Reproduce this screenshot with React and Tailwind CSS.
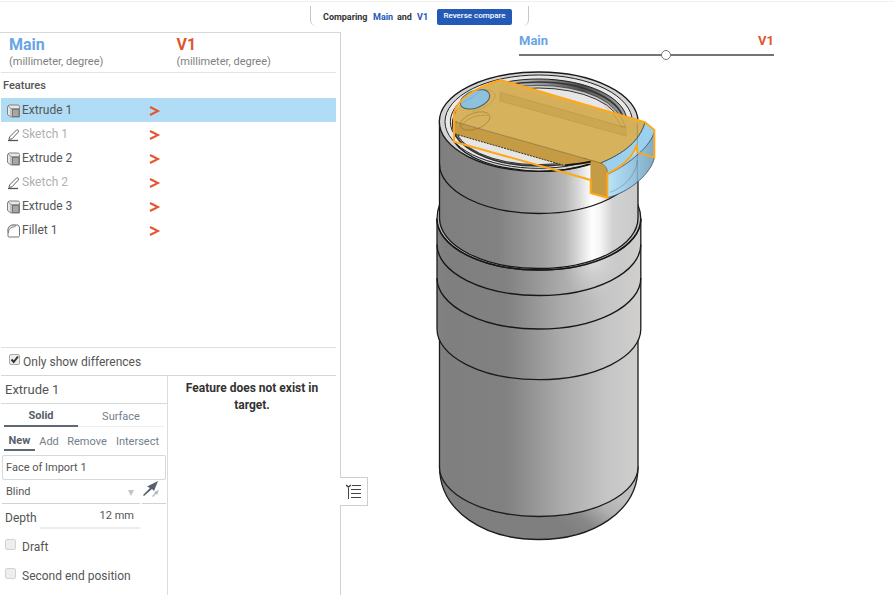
import React from "react";

const features = [
  { name: "Extrude 1", type: "extrude", selected: true },
  { name: "Sketch 1", type: "sketch" },
  { name: "Extrude 2", type: "extrude" },
  { name: "Sketch 2", type: "sketch" },
  { name: "Extrude 3", type: "extrude" },
  { name: "Fillet 1", type: "fillet" },
];

function FeatureIcon({ type }) {
  return (
    <svg width="14" height="14" viewBox="0 0 14 14" fill="none" className="mt-0.5 shrink-0" aria-hidden="true">
      {type === "extrude" && (
        <>
          <path d="M.5 2.500 2 1h9.500l1 1.500V13H4L.5 10.500Z" fill="#e8e8e8" stroke="#808080" />
          <path d="M4 13V4.500h8.500M1 2l3 2.500" stroke="#999" />
          <rect x="5.500" y="5.500" width="6.500" height="7" fill="#a6a6a6" stroke="#777" />
        </>
      )}
      {type === "sketch" && (
        <>
          <path d="m2.500 9 7-7c.8-.8 2.800.8 2 1.800l-6.500 7-3 .7Z" stroke="#666" />
          <path d="M1 12.500h10" stroke="#555" strokeWidth="1.300" />
        </>
      )}
      {type === "fillet" && (
        <>
          <path d="M1 12V6c0-3 2-5 5-5h5l1.500 2v8.500c0 1-.5 1.500-1.500 1.500H2c-.6 0-1-.4-1-1Z" fill="#fff" stroke="#777" />
          <path d="M1.500 9C1.500 5 4 3 7.500 3L9 1.500 6 1C3 1 1 3 1 6Z" fill="#ddd" stroke="#777" strokeWidth=".8" />
        </>
      )}
    </svg>
  );
}

function CheckOption({ id, label, checked = false, className }) {
  return (
    <div className={className}>
      <span className="relative mb-1 size-[11px]">
        <input
          id={id}
          type="checkbox"
          defaultChecked={checked}
          className="peer block size-[11px] appearance-none rounded-xs border border-[#d2d2d2] bg-[#eeeeee] checked:border-[#aaaaaa]"
        />
        <svg viewBox="0 0 11 11" className="pointer-events-none absolute inset-0 hidden peer-checked:block" aria-hidden="true">
          <path d="m2.500 5.500 2.200 2.500L9 2.500" fill="none" stroke="#333" strokeWidth="2" />
        </svg>
      </span>
      <label htmlFor={id}>{label}</label>
    </div>
  );
}

function ComparePanel() {
  return (
    <aside className="flex w-[341px] shrink-0 flex-col border-t border-r border-t-[#d8d8d8] border-r-[#d2d2d2] pr-1 pl-px">
      <header className="grid grid-cols-2 border-b border-[#dde5ec] pt-1 pb-0.5">
        <div className="pl-2">
          <h2 className="text-base leading-4 font-bold text-[#68a5e6]">Main</h2>
          <p className="text-[11px] leading-[17px] text-[#808080]">(millimeter, degree)</p>
        </div>
        <div className="pl-2">
          <h2 className="text-base leading-4 font-bold text-[#e0562f]">V1</h2>
          <p className="text-[11px] leading-[17px] text-[#808080]">(millimeter, degree)</p>
        </div>
      </header>
      <h3 className="pl-0.5 text-[11px] leading-[25px] font-medium">Features</h3>
      <ul>
        {features.map((f) => (
          <li key={f.name} className={f.selected ? "flex h-6 items-center bg-[#b0ddf5] pl-1.5" : "flex h-6 items-center pl-1.5"}>
            <FeatureIcon type={f.type} />
            <span className={f.type === "sketch" ? "ml-px w-[127px] text-[#b0b0b0]" : "ml-px w-[127px]"}>{f.name}</span>
            <svg width="12" height="12" viewBox="0 0 12 12" className="mt-0.5" aria-hidden="true">
              <path d="m1 2 8 4-8 4" fill="none" stroke="#e4552f" strokeWidth="2" />
            </svg>
          </li>
        ))}
      </ul>
      <div className="flex-1" />
      <CheckOption id="differences" label="Only show differences" checked className="flex h-[29px] items-center gap-[3px] border-t border-b border-t-[#d9e1e7] border-b-[#d6d6d6] pl-2" />
      <div className="flex h-[219px]">
        <FeatureForm />
        <p className="flex-1 px-4 pt-1 text-center text-xs leading-[17px] font-bold text-[#333]">
          Feature does not exist in target.
        </p>
      </div>
    </aside>
  );
}

function FeatureForm() {
  return (
    <form className="w-[167px] border-r border-[#d9dde0]">
      <h3 className="border-b border-[#d4d9dc] pl-1 text-[13px] leading-[27px]">Extrude 1</h3>
      <div className="mx-[3px] flex text-[11px] text-[#72808b]">
        <button type="button" className="h-[23px] w-[74px] border-b-2 border-[#5d6a75] pt-1 font-bold text-[#55616b]">Solid</button>
        <button type="button" className="flex-1 border-b border-[#eeeeee] pt-1">Surface</button>
      </div>
      <div className="mx-[3px] flex h-6 text-[11px] text-[#72808b]">
        <button type="button" className="w-[31px] border-b-2 border-[#5d6a75] pt-1.5 font-bold text-[#55616b]">New</button>
        <button type="button" className="w-7 pt-1.5">Add</button>
        <button type="button" className="w-12 pt-1.5">Remove</button>
        <button type="button" className="flex-1 pt-1.5">Intersect</button>
      </div>
      <input
        aria-label="Faces to extrude"
        defaultValue="Face of Import 1"
        className="mt-1 ml-px block h-[25px] w-[164px] rounded-xs border border-[#d4d9dd] pl-[3px] text-[11px] text-[#555]"
      />
      <div className="mx-px flex h-6 gap-0.5">
        <span className="relative w-[138px] border-b border-[#d2d2d2]">
          <select aria-label="End type" defaultValue="Blind" className="h-full w-full appearance-none bg-transparent pt-0.5 pl-1 text-[11px]">
            <option>Blind</option>
          </select>
          <svg width="6" height="6" viewBox="0 0 6 6" className="pointer-events-none absolute top-2.5 right-1.5" aria-hidden="true">
            <path d="M0 0h6L3 6Z" fill="#c4c4c4" />
          </svg>
        </span>
        <button type="button" aria-label="Flip direction" className="flex-1 border-b border-[#d2d2d2] pb-1">
          <svg width="17" height="17" viewBox="0 0 17 17" aria-hidden="true">
            <path d="m1 14 7-7-3-1.500L16 0l-4 10-2-2-8 7Z" fill="#56616b" />
            <path d="m10 15 3-3-1-1 5-2-2 5-1-1-3 3Z" fill="#b5babe" />
          </svg>
        </button>
      </div>
      <div className="flex h-[25px] w-[139px] items-center">
        <label htmlFor="depth" className="w-[39px] pt-0.5 pl-1">Depth</label>
        <input id="depth" defaultValue="12 mm" className="h-[25px] w-[100px] border-b-2 border-[#ececec] pr-1.5 text-right text-[11px]" />
      </div>
      <CheckOption id="draft" label="Draft" className="mt-[3px] flex h-[29px] items-center gap-1.5 pl-1" />
      <CheckOption id="second" label="Second end position" className="flex h-[29px] items-center gap-1.5 pl-1" />
    </form>
  );
}

/* Model drawing: bottle body in view pixels, cap and rim in thirds of a pixel. */
function Bottle() {
  return (
    <svg width="240" height="480" viewBox="430 65 240 480" role="img" aria-label="Bottle model">
      <defs>
        <linearGradient id="body" gradientUnits="userSpaceOnUse" x1="437" x2="641" y1="0" y2="0">
          <stop offset="0" stopColor="#838383" />
          <stop offset=".04" stopColor="#7f7f7f" />
          <stop offset=".34" stopColor="#818181" />
          <stop offset=".6" stopColor="#a9a9a9" />
          <stop offset=".82" stopColor="#c4c4c4" />
          <stop offset="1" stopColor="#d1d0cf" />
        </linearGradient>
        <linearGradient id="neck" gradientUnits="userSpaceOnUse" x1="437" x2="641" y1="0" y2="0">
          <stop offset="0" stopColor="#7f7f7f" />
          <stop offset=".3" stopColor="#828282" />
          <stop offset=".52" stopColor="#a0a0a0" />
          <stop offset=".63" stopColor="#b8b8b8" />
          <stop offset=".7" stopColor="#dcdcdc" />
          <stop offset=".76" stopColor="#ffffff" />
          <stop offset=".8" stopColor="#f5f5f5" />
          <stop offset=".86" stopColor="#d2d2d2" />
          <stop offset="1" stopColor="#c8c8c8" />
        </linearGradient>
        <radialGradient id="glow" gradientUnits="userSpaceOnUse" cx="593" cy="258" r="45" gradientTransform="translate(593 258) scale(.7 1) translate(-593 -258)">
          <stop offset="0" stopColor="#e8e8e8" stopOpacity=".8" />
          <stop offset="1" stopColor="#d0d0d0" stopOpacity="0" />
        </radialGradient>
        <linearGradient id="base" gradientUnits="userSpaceOnUse" x1="575" x2="608" y1="534" y2="490">
          <stop offset="0" stopColor="#7f7f7f" />
          <stop offset=".3" stopColor="#888" />
          <stop offset=".7" stopColor="#b2b2b2" />
          <stop offset="1" stopColor="#bebebe" />
        </linearGradient>
        <linearGradient id="ring" x1="0" x2="1" y1="0" y2="0">
          <stop offset="0" stopColor="#eeeeee" />
          <stop offset=".45" stopColor="#aaaaaa" />
          <stop offset=".75" stopColor="#4c4c4c" />
          <stop offset="1" stopColor="#aaaaaa" />
        </linearGradient>
        <linearGradient id="lip" x1="0" x2="1" y1="0" y2="0">
          <stop offset="0" stopColor="#c5ecfb" />
          <stop offset=".35" stopColor="#a9d6ee" />
          <stop offset="1" stopColor="#80aac5" />
        </linearGradient>
      </defs>

      <g stroke="#1c1c1c" strokeWidth="1.300">
        <path d="M439.500 467C440 512 485 539.500 538.700 539.500S638 512 638 467Z" fill="url(#base)" />
        <path d="M439.500 325V467A99.250 49.500 0 0 0 638 467V325Z" fill="url(#body)" />
        <path d="M437 219V329A101.900 50.700 0 0 0 640.800 329V219Z" fill="url(#body)" />
        <path d="M439.500 205C437.500 210 437 214 437 219A101.900 51 0 0 0 640.800 219C640.800 214 640 210 638 205Z" fill="#bcbcbc" />
      </g>
      <path d="M437.600 219A101.300 51 0 0 0 640.200 219V278A101.300 51 0 0 1 437.600 278Z" fill="url(#glow)" />
      <g fill="none" stroke="#171717" strokeWidth="1.300">
        <path d="M439.500 122V218A99.250 50.500 0 0 0 638 218V122Z" fill="url(#neck)" />
        <path d="M439.500 164A99.250 49.500 0 0 0 638 164" />
        <path d="M437 219A101.900 51 0 0 0 640.800 219" />
        <path d="M437 244.500A101.900 51 0 0 0 640.800 244.500" />
        <path d="M437 278A101.900 51 0 0 0 640.800 278" />
      </g>

      <g transform="translate(430 65) scale(.33333)" strokeLinejoin="round">
        <ellipse cx="326" cy="170" rx="298" ry="149" fill="#d4d4d4" stroke="#1a1a1a" strokeWidth="4" />
        <ellipse cx="326" cy="170" rx="281" ry="140" fill="#e8e8e8" stroke="#222" strokeWidth="3" />
        <ellipse cx="326" cy="170" rx="265" ry="128" fill="url(#ring)" stroke="#222" strokeWidth="3" />
        <ellipse cx="325" cy="177" rx="257" ry="126" fill="none" stroke="#333" strokeWidth="5" />
        <ellipse cx="324" cy="180" rx="251" ry="119" fill="#cfcfcf" stroke="#222" strokeWidth="2" />
        <ellipse cx="324" cy="184" rx="247" ry="115" fill="#e6e6e6" stroke="#333" strokeWidth="3" />
        <path d="M72 230C105 276 185 313 325 319C395 319 452 306 482 296" fill="none" stroke="#171717" strokeWidth="4" />

        <path d="M645 172 673 195V278C665 323 600 382 532 398V325L528 307 512 294C570 270 625 235 645 172Z" fill="url(#lip)" />
        <path d="M645 172 673 195C661 250 588 304 532 326Q533 304 512 294C575 268 623 230 645 172Z" fill="#9bd0ee" />
        <path d="M532 325C565 308 592 288 606 267L620 240V262C593 291 570 302 532 325Z" fill="#c5eafa" />
        <path d="M72 145Q77 157 75 170L512 294Q533 304 532 322V398L482 384V296L405 302 75 207Z" fill="#c59b43" />
        <path d="M212 45 645 172C628 230 581 265 512 294L74 169C66 111 146 67 212 45Z" fill="#d7b25c" />
        <path d="M210 82 584 188 622 218V174L212 54Z" fill="#c8a44f" fillOpacity=".15" />
        <path d="M210 82 590 188V214L210 108Z" fill="#c8a34e" fillOpacity=".7" />
        <path d="M482 286 512 294Q533 304 532 326V398L482 384Z" fill="#c59b43" />

        <g fill="none" stroke="#82652e" strokeWidth="2">
          <path d="M75 170 512 294Q533 304 532 322M645 172C628 230 581 265 512 294" />
          <path d="M210 82V108L590 214M210 82 590 188" strokeOpacity=".25" />
          <ellipse cx="135" cy="168" rx="47" ry="24" transform="rotate(-20 135 168)" strokeOpacity=".65" />
          <path d="M96 181C110 158 145 148 174 151" strokeOpacity=".5" />
          <path d="M104 96C145 67 192 68 196 91C196 108 164 132 128 139" strokeOpacity=".3" />
          <path d="M520 111Q575 145 586 185H574C564 161 548 143 522 123" strokeOpacity=".4" />
        </g>
        <path d="M75 207 405 302" fill="none" stroke="#3d321c" strokeWidth="3" strokeDasharray="6 3" />
        <path d="M405 301Q453 296 482 290" fill="none" stroke="#111" strokeWidth="5" />
        <ellipse cx="135" cy="103" rx="46" ry="26" transform="rotate(-20 135 103)" fill="#8ec1dd" stroke="#48606c" strokeWidth="3" />
        <path d="M95 114Q127 101 148 80" fill="none" stroke="#77a7c0" strokeWidth="2" />
        <g fill="none" stroke="#37566a" strokeWidth="2.500">
          <path d="M645 172C628 230 581 265 512 294M672 204C655 254 580 308 532 328" />
          <path d="M622 175V352M540 382C585 366 620 326 622 285" strokeOpacity=".4" />
          <path d="M673 278C665 323 600 382 532 398" />
        </g>
        <path d="M212 45 645 172 673 195V278L622 262 620 240C610 278 566 312 532 325V398L482 384V345L72 230V145C82 100 144 65 212 45Z" fill="none" stroke="#ffa71b" strokeWidth="6" />
      </g>
    </svg>
  );
}

export default function App() {
  return (
    <div className="flex h-screen min-h-[595px] flex-col overflow-hidden bg-white font-['Roboto',sans-serif] text-xs text-[#555]">
      <div className="h-1.5 shrink-0 pt-px">
        <div className="h-px bg-[#f1f1f1]" />
      </div>
      <header className="ml-[310px] flex h-[26px] w-[219px] shrink-0 flex-col">
        <div className="flex h-5 items-center rounded-b-md border-r border-l border-[#c6c6c6] pt-px pl-3 text-[9px] font-bold text-[#333]">
          <span className="w-[50px]">Comparing</span>
          <a href="#main" className="w-6 text-[#2259b4]">Main</a>
          <span className="w-5">and</span>
          <a href="#v1" className="w-5 text-[#2259b4]">V1</a>
          <button type="button" className="h-4 w-[75px] rounded-xs bg-[#235ab5] text-[8px] font-medium text-white">Reverse compare</button>
        </div>
      </header>
      <main className="flex min-h-0 flex-1">
        <ComparePanel />
        <section className="relative min-w-0 flex-1">
          <button type="button" aria-label="Toggle feature list" className="absolute top-[445px] -left-px grid h-[29px] w-7 place-items-center border border-l-0 border-[#cfcfcf] bg-white">
            <svg width="16" height="16" viewBox="0 0 16 16" fill="none" stroke="#444" aria-hidden="true">
              <path d="m0 1 2.500 2L5 1" strokeWidth="1.500" />
              <path d="M2.500 4v11M6 1.500h9M5 5.500h10M5 9.500h10M5 13.500h10" />
            </svg>
          </button>
          <div className="ml-[178px] w-[255px] pt-0.5">
            <div className="flex justify-between text-[13px] leading-[14px] font-bold">
              <label htmlFor="blend" className="text-[#68a5e6]">Main</label>
              <span className="text-[#e0562f]">V1</span>
            </div>
            <input
              id="blend"
              type="range"
              defaultValue="58"
              className="block h-3.5 w-full appearance-none bg-transparent [&::-webkit-slider-runnable-track]:h-0.5 [&::-webkit-slider-runnable-track]:bg-[#747474] [&::-webkit-slider-thumb]:-mt-1 [&::-webkit-slider-thumb]:size-2.5 [&::-webkit-slider-thumb]:appearance-none [&::-webkit-slider-thumb]:rounded-full [&::-webkit-slider-thumb]:border [&::-webkit-slider-thumb]:border-[#777] [&::-webkit-slider-thumb]:bg-white"
            />
          </div>
          <div className="pt-[3px] pl-[89px]">
            <Bottle />
          </div>
        </section>
      </main>
    </div>
  );
}
